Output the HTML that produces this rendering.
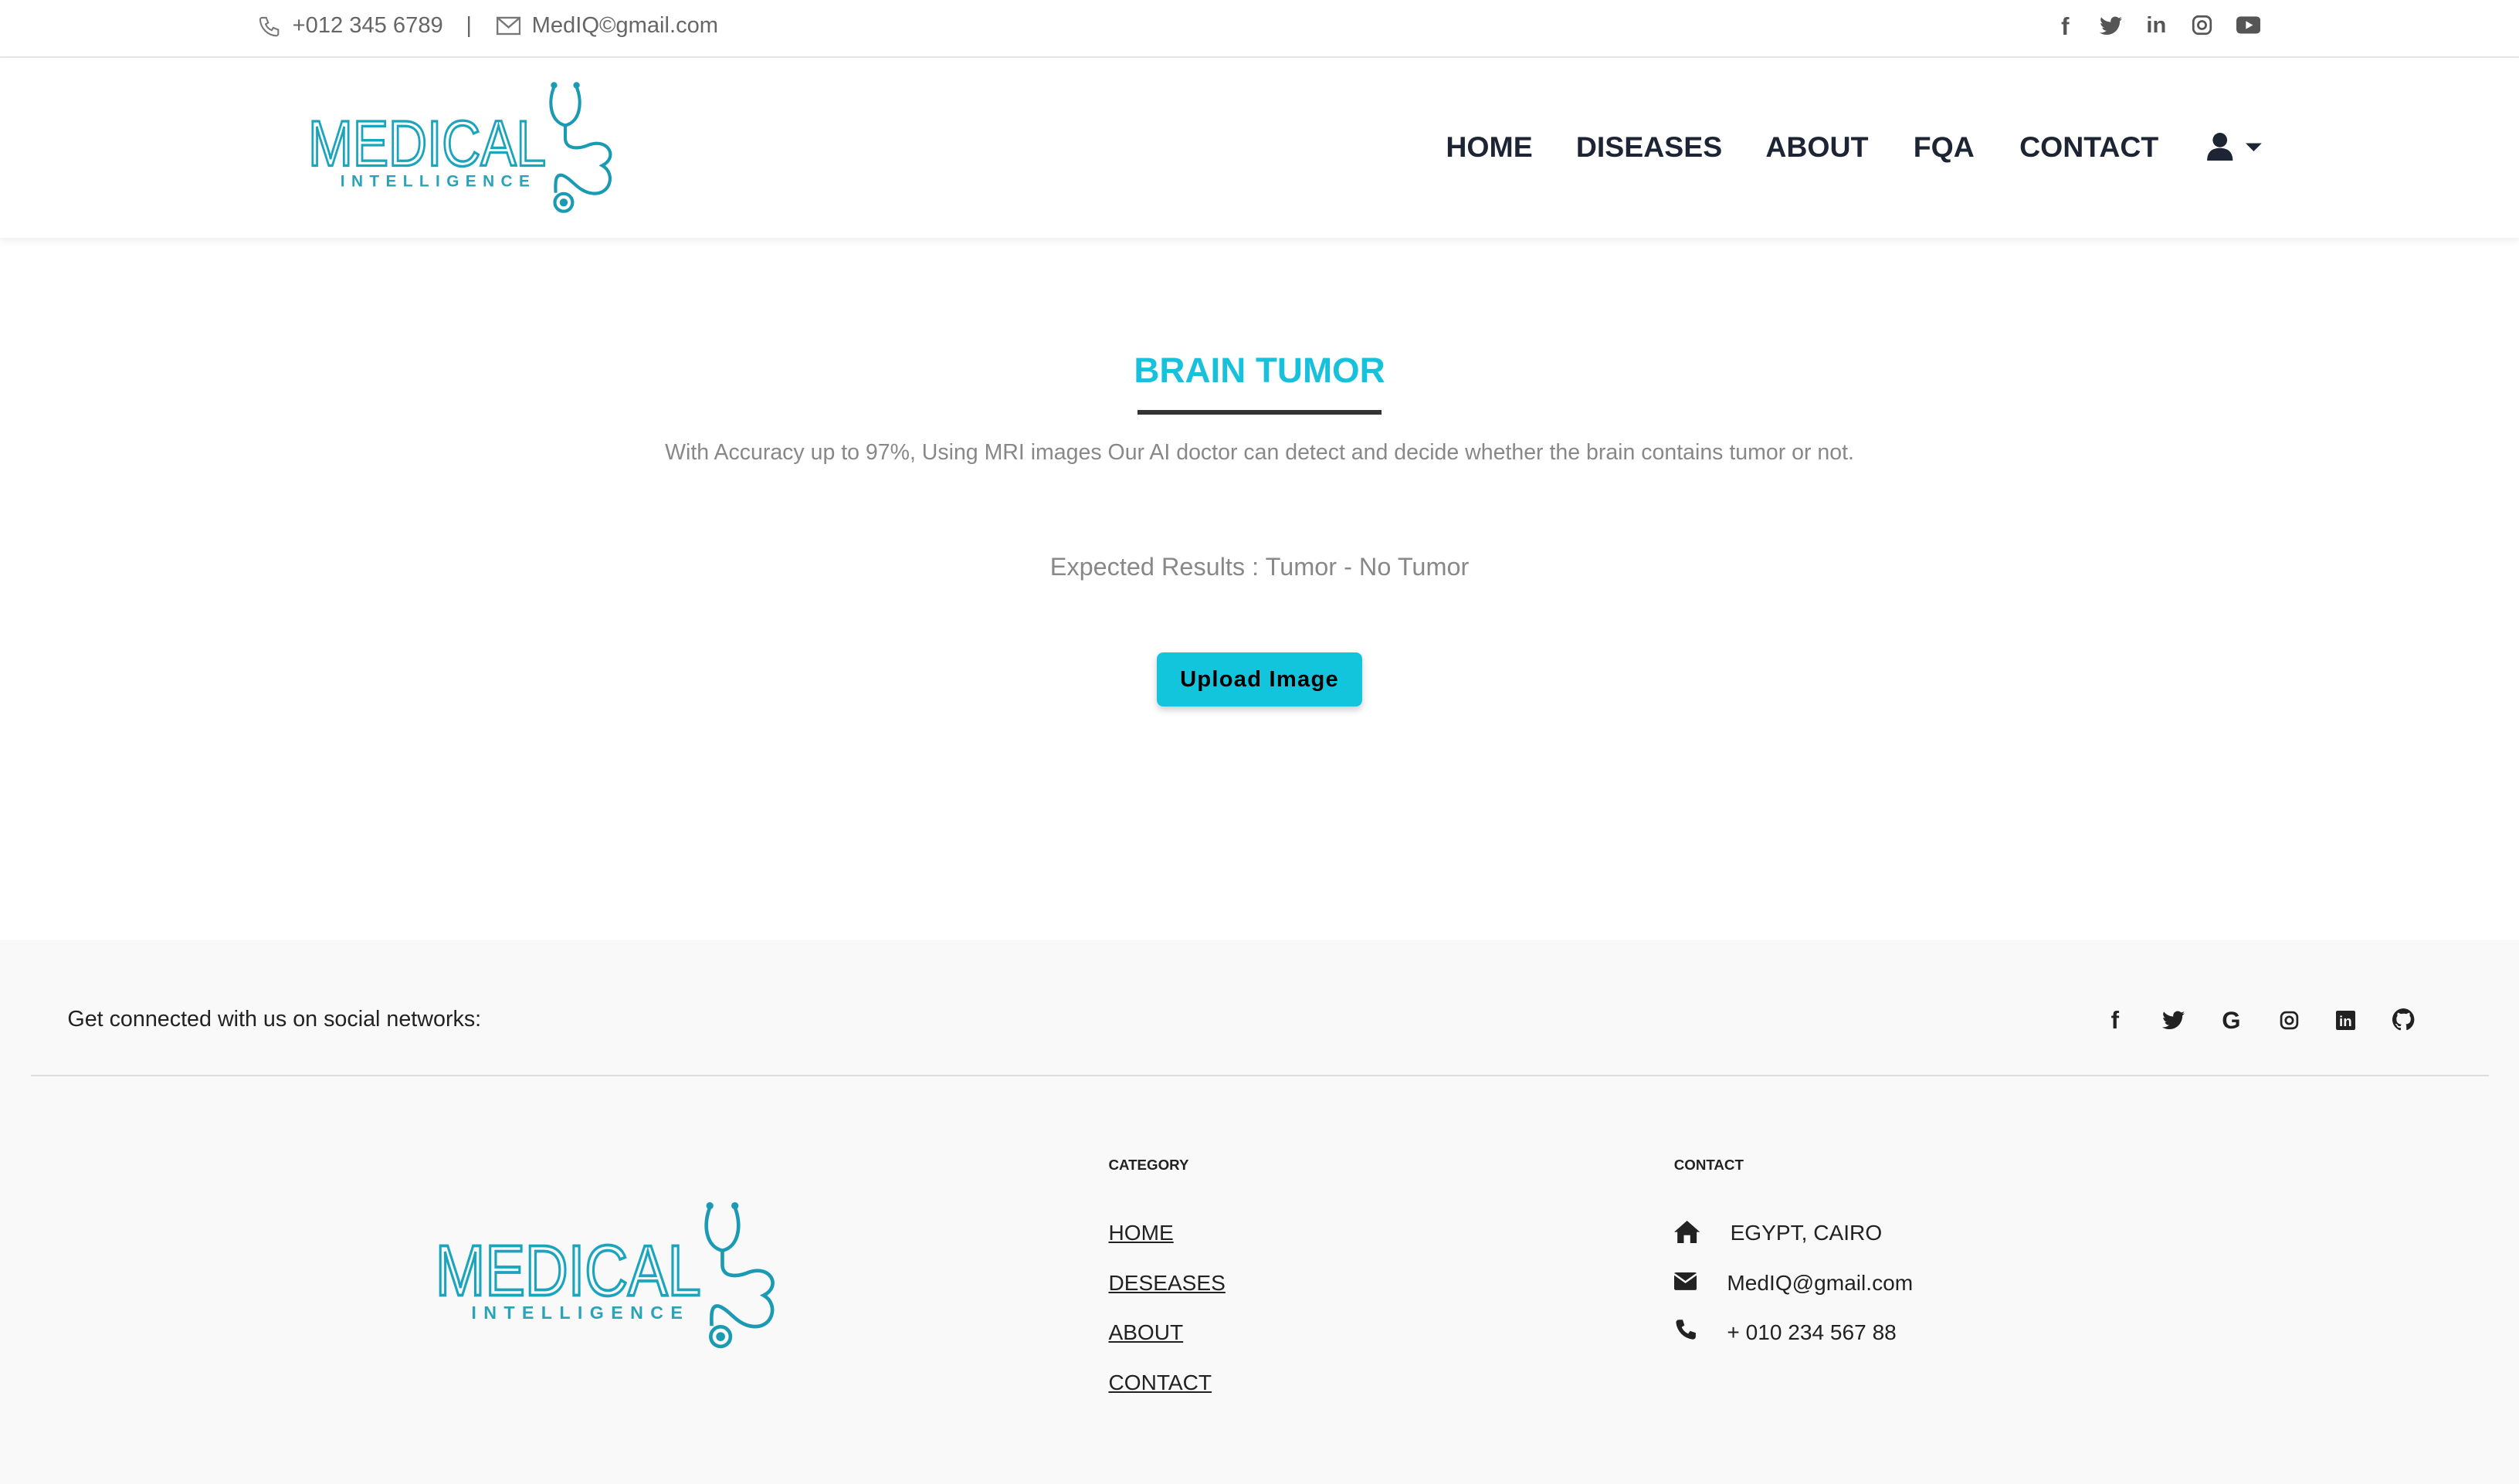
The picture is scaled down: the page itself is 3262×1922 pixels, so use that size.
<!DOCTYPE html>
<html><head><meta charset="utf-8"><style>
html,body{margin:0;padding:0}
body{width:1568px;height:924px;zoom:2.0804;font-family:"Liberation Sans",sans-serif;background:#fff;position:relative;overflow:hidden}
.a{position:absolute;white-space:nowrap}
.top{position:absolute;left:0;top:0;width:1568px;height:35px;border-bottom:1px solid #e6e6e6;font-size:14px;color:#666}
.nav{position:absolute;left:0;top:36px;width:1568px;height:112px;box-shadow:0 2px 4px rgba(0,0,0,.07)}
.nav .i{position:absolute;font-size:18px;font-weight:bold;color:#1d2535;letter-spacing:0}
.foot{position:absolute;left:0;top:585px;width:1568px;height:339px;background:#f9f9f9}
.lnk{font-size:13.5px;color:#222;text-decoration:underline}
svg{display:block}
</style></head><body>
<div class="top">
<svg class="a" style="left:160px;top:9px" width="15" height="15" viewBox="0 0 24 24" fill="none" stroke="#777" stroke-width="1.6"><path d="M5 3h4l2 5-2.5 1.5a11 11 0 0 0 6 6L16 13l5 2v4a2 2 0 0 1-2 2A17 17 0 0 1 3 5a2 2 0 0 1 2-2z"/></svg>
<span class="a" style="left:182px;top:8px">+012 345 6789</span>
<span class="a" style="left:290px;top:8px">|</span>
<svg class="a" style="left:309px;top:10px" width="15" height="12" viewBox="0 0 16 12" fill="none" stroke="#777" stroke-width="1.2"><rect x=".6" y=".6" width="14.8" height="10.8"/><path d="M.6 .6 8 7l7.4-6.4"/></svg>
<span class="a" style="left:331px;top:8px">MedIQ©gmail.com</span>
<span class="a" style="left:1283px;top:8px;font-size:15px;font-weight:bold;color:#555">f</span>
<svg class="a" style="left:1307px;top:10px" width="14" height="12" viewBox="0 0 24 20"><path fill="#555" d="M24 2.4a10 10 0 0 1-2.8.8A5 5 0 0 0 23.3.5a10 10 0 0 1-3.1 1.2A4.9 4.9 0 0 0 11.8 6 14 14 0 0 1 1.7.9a4.9 4.9 0 0 0 1.5 6.6A5 5 0 0 1 1 6.9a4.9 4.9 0 0 0 3.9 4.8 5 5 0 0 1-2.2.1 4.9 4.9 0 0 0 4.6 3.4A9.9 9.9 0 0 1 0 17.3 14 14 0 0 0 7.5 19.5c9 0 14-7.5 14-14v-.6A10 10 0 0 0 24 2.4z"/></svg>
<span class="a" style="left:1336px;top:8px;font-size:14px;font-weight:bold;color:#555">in</span>
<svg class="a" style="left:1364px;top:9px" width="13" height="13" viewBox="0 0 24 24" fill="none" stroke="#555" stroke-width="2.4"><rect x="2" y="2" width="20" height="20" rx="6"/><circle cx="12" cy="12" r="4.5"/></svg>
<svg class="a" style="left:1392px;top:10px" width="15" height="11" viewBox="0 0 24 17"><rect width="24" height="17" rx="4" fill="#555"/><path d="M9.5 4.5v8l7-4z" fill="#fff"/></svg>
</div>
<div class="nav">
<svg class="a" style="left:190px;top:12px" width="196" height="86" viewBox="0 0 196 86">
<text x="2" y="55" font-family="Liberation Sans Narrow,Liberation Sans,sans-serif" font-size="40" fill="none" stroke="#1ba5bd" stroke-width="1.6" textLength="148" lengthAdjust="spacingAndGlyphs">MEDICAL</text>
<text x="22" y="68" font-family="Liberation Sans,sans-serif" font-size="10" font-weight="bold" fill="#2aa3b8" letter-spacing="4.2" textLength="122" lengthAdjust="spacing">INTELLIGENCE</text>
<g fill="none" stroke="#1a9bb3" stroke-width="2"><path d="M155 6c-4 10-2 22 7 24 9-2 11-14 7-24"/><path d="M162 30v8c0 7 8 7 15 4 12-4 18 8 8 13 9 5 5 20-8 17-8-2-11-9-17-11-5-1-4 7-4 11"/><circle cx="161" cy="78" r="5.5"/></g>
<circle cx="155" cy="5" r="2" fill="#1a9bb3"/><circle cx="169" cy="5" r="2" fill="#1a9bb3"/><circle cx="161" cy="78" r="2.5" fill="#1a9bb3"/>
</svg>
<span class="i" style="left:900px;top:45px">HOME</span>
<span class="i" style="left:981px;top:45px">DISEASES</span>
<span class="i" style="left:1099px;top:45px">ABOUT</span>
<span class="i" style="left:1191px;top:45px">FQA</span>
<span class="i" style="left:1257px;top:45px">CONTACT</span>
<svg class="a" style="left:1373px;top:46px" width="36" height="18" viewBox="0 0 36 18"><circle cx="9" cy="5" r="4.5" fill="#1d2535"/><path d="M1 18c0-6 3.5-8 8-8s8 2 8 8z" fill="#1d2535"/><path d="M25 7h10l-5 5z" fill="#1d2535"/></svg>
</div>
<div class="a" style="left:0;width:1568px;top:218px;text-align:center;font-size:22px;font-weight:bold;color:#17c1dc">BRAIN TUMOR</div>
<div class="a" style="left:708px;top:255px;width:152px;height:3px;background:#333"></div>
<div class="a" style="left:0;width:1568px;top:274px;text-align:center;font-size:13.7px;color:#888">With Accuracy up to 97%, Using MRI images Our AI doctor can detect and decide whether the brain contains tumor or not.</div>
<div class="a" style="left:0;width:1568px;top:344px;text-align:center;font-size:15.6px;color:#888">Expected Results : Tumor - No Tumor</div>
<div class="a" style="left:720px;top:406px;width:128px;height:34px;background:#13c5dc;border-radius:4px;box-shadow:0 2px 4px rgba(0,0,0,.2);text-align:center;line-height:34px;font-size:14px;font-weight:bold;letter-spacing:.6px;color:#000">Upload Image</div>
<div class="foot">
<span class="a" style="left:42px;top:42px;font-size:13.8px;color:#222">Get connected with us on social networks:</span>
<span class="a" style="left:1314px;top:42px;font-size:15px;font-weight:bold;color:#222">f</span>
<svg class="a" style="left:1346px;top:44px" width="14" height="12" viewBox="0 0 24 20"><path fill="#222" d="M24 2.4a10 10 0 0 1-2.8.8A5 5 0 0 0 23.3.5a10 10 0 0 1-3.1 1.2A4.9 4.9 0 0 0 11.8 6 14 14 0 0 1 1.7.9a4.9 4.9 0 0 0 1.5 6.6A5 5 0 0 1 1 6.9a4.9 4.9 0 0 0 3.9 4.8 5 5 0 0 1-2.2.1 4.9 4.9 0 0 0 4.6 3.4A9.9 9.9 0 0 1 0 17.3 14 14 0 0 0 7.5 19.5c9 0 14-7.5 14-14v-.6A10 10 0 0 0 24 2.4z"/></svg>
<span class="a" style="left:1383px;top:42px;font-size:15px;font-weight:bold;color:#222">G</span>
<svg class="a" style="left:1419px;top:44px" width="12" height="12" viewBox="0 0 24 24" fill="none" stroke="#222" stroke-width="2.6"><rect x="2" y="2" width="20" height="20" rx="6"/><circle cx="12" cy="12" r="4.5"/></svg>
<div class="a" style="left:1454px;top:44px;width:12px;height:12px;background:#222;border-radius:1px;color:#f9f9f9;font-size:9px;font-weight:bold;line-height:13px;text-align:center">in</div>
<svg class="a" style="left:1489px;top:43px" width="14" height="14" viewBox="0 0 16 16"><path fill="#222" d="M8 0a8 8 0 0 0-2.5 15.6c.4 0 .5-.2.5-.4v-1.5c-2.2.5-2.7-1-2.7-1-.4-.9-.9-1.2-.9-1.2-.7-.5.1-.5.1-.5.8.1 1.2.8 1.2.8.7 1.3 1.900 .9 2.3.7.1-.5.3-.9.5-1.1-1.8-.2-3.6-.9-3.6-4 0-.9.3-1.6.8-2.1-.1-.2-.4-1 .1-2.1 0 0 .7-.2 2.2.8a7.5 7.5 0 0 1 4 0c1.5-1 2.2-.8 2.200-.8.4 1.1.2 1.9.1 2.1.5.6.8 1.3.8 2.1 0 3.1-1.9 3.7-3.6 3.9.3.3.5.8.5 1.5v2.2c0 .2.1.5.6.4A8 8 0 0 0 8 0z"/></svg>
<div class="a" style="left:19px;top:84px;width:1530px;height:1px;background:#ddd"></div>
<svg class="a" style="left:268px;top:160px" width="220" height="96" viewBox="0 0 196 86">
<text x="2" y="55" font-family="Liberation Sans Narrow,Liberation Sans,sans-serif" font-size="40" fill="none" stroke="#1ba5bd" stroke-width="1.6" textLength="148" lengthAdjust="spacingAndGlyphs">MEDICAL</text>
<text x="22" y="68" font-family="Liberation Sans,sans-serif" font-size="10" font-weight="bold" fill="#2aa3b8" letter-spacing="4.2" textLength="122" lengthAdjust="spacing">INTELLIGENCE</text>
<g fill="none" stroke="#1a9bb3" stroke-width="2"><path d="M155 6c-4 10-2 22 7 24 9-2 11-14 7-24"/><path d="M162 30v8c0 7 8 7 15 4 12-4 18 8 8 13 9 5 5 20-8 17-8-2-11-9-17-11-5-1-4 7-4 11"/><circle cx="161" cy="78" r="5.5"/></g>
<circle cx="155" cy="5" r="2" fill="#1a9bb3"/><circle cx="169" cy="5" r="2" fill="#1a9bb3"/><circle cx="161" cy="78" r="2.5" fill="#1a9bb3"/>
</svg>
<span class="a" style="left:690px;top:135px;font-size:9px;font-weight:bold;color:#222">CATEGORY</span>
<span class="a lnk" style="left:690px;top:175px">HOME</span>
<span class="a lnk" style="left:690px;top:206px">DESEASES</span>
<span class="a lnk" style="left:690px;top:237px">ABOUT</span>
<span class="a lnk" style="left:690px;top:268px">CONTACT</span>
<span class="a" style="left:1042px;top:135px;font-size:9px;font-weight:bold;color:#222">CONTACT</span>
<svg class="a" style="left:1042px;top:175px" width="16" height="14" viewBox="0 0 16 14"><path d="M8 0 0 7h2v7h4V9h4v5h4V7h2z" fill="#222"/></svg>
<span class="a" style="left:1077px;top:175px;font-size:13.5px;color:#222">EGYPT, CAIRO</span>
<svg class="a" style="left:1042px;top:207px" width="14" height="11" viewBox="0 0 14 11"><rect width="14" height="11" rx="1" fill="#222"/><path d="M0 1l7 5 7-5" stroke="#f9f9f9" fill="none" stroke-width="1.2"/></svg>
<span class="a" style="left:1075px;top:206px;font-size:13.5px;color:#222">MedIQ@gmail.com</span>
<svg class="a" style="left:1042px;top:236px" width="14" height="14" viewBox="0 0 24 24"><path fill="#222" d="M5 1h4l2 6-3 2a13 13 0 0 0 7 7l2-3 6 2v4a3 3 0 0 1-3 3A20 20 0 0 1 2 4a3 3 0 0 1 3-3z"/></svg>
<span class="a" style="left:1075px;top:237px;font-size:13.5px;color:#222">+ 010 234 567 88</span>
</div>
</body></html>
